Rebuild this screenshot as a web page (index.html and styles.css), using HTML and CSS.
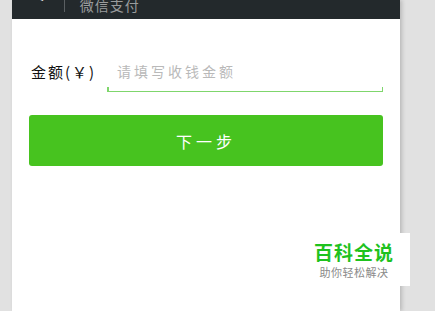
FILE: index.html
```html
<!DOCTYPE html>
<html lang="zh-CN">
<head>
    <meta charset="UTF-8">
    <meta name="viewport" content="width=device-width, initial-scale=1.0">
    <title>微信支付</title>
    <link rel="stylesheet" href="styles.css">
</head>
<body>

    <div class="phone">
        <div class="topbar">
            <span class="back">&lt;</span>
            <span class="divider"></span>
            <span class="title">微信支付</span>
        </div>

        <div class="form">
            <div class="field">
                <label class="label" for="amount">金额(￥)</label>
                <div class="input-wrap">
                    <input class="input" id="amount" type="text" placeholder="请填写收钱金额">
                </div>
            </div>

            <button class="next-button">下一步</button>
        </div>
    </div>

    <div class="badge">
        <div class="badge-title">百科全说</div>
        <div class="badge-sub">助你轻松解决</div>
    </div>

</body>
</html>
```

FILE: styles.css
```css
body {
    margin: 0;
    height: 311px;
    overflow: hidden;
    background-color: #e1e1e1;
    font-family: "Noto Sans CJK SC", "Noto Sans", sans-serif;
    position: relative;
}

.phone {
    margin-left: 12px;
    width: 388px;
    height: 311px;
    background: white;
    box-shadow: 2px 0 4px rgba(0, 0, 0, 0.18);
}

.topbar {
    height: 19px;
    background-color: #23292c;
    display: flex;
    align-items: flex-end;
    overflow: hidden;
}

.back {
    color: white;
    font-size: 20px;
    font-weight: bold;
    line-height: 20px;
    margin-left: 20px;
    margin-bottom: 13px;
}

.divider {
    width: 1px;
    height: 14px;
    background-color: #5a5f62;
    margin-left: 20px;
    margin-bottom: 7px;
}

.title {
    color: #9a9c9d;
    font-size: 14px;
    line-height: 14px;
    letter-spacing: 1px;
    margin-left: 15px;
    margin-bottom: 7px;
}

.form {
    padding: 0 17px;
}

.field {
    display: flex;
    align-items: flex-end;
    margin-top: 42px;
}

.label {
    width: 76px;
    padding-left: 2px;
    font-size: 15px;
    letter-spacing: 2px;
    color: #111;
    line-height: 20px;
    margin-bottom: 10px;
    white-space: nowrap;
}

.input-wrap {
    flex: 1;
    position: relative;
    border-bottom: 1.5px solid #7fd66c;
}

.input-wrap::before,
.input-wrap::after {
    content: "";
    position: absolute;
    bottom: 0;
    width: 1.5px;
    height: 4px;
    background-color: #7fd66c;
}

.input-wrap::before {
    left: 0;
}

.input-wrap::after {
    right: 0;
}

.input {
    display: block;
    width: 100%;
    box-sizing: border-box;
    border: none;
    outline: none;
    background: transparent;
    font-family: inherit;
    font-size: 14px;
    height: 30px;
    padding: 0 0 11px 10px;
    margin: 0;
    color: #333;
}

.input::placeholder {
    color: #b9b9b9;
    letter-spacing: 3px;
}

.next-button {
    display: block;
    width: 100%;
    height: 51px;
    margin-top: 23px;
    border: none;
    border-radius: 3px;
    background-color: #47c31f;
    color: white;
    font-family: inherit;
    font-size: 16px;
    letter-spacing: 4px;
    cursor: pointer;
}

.badge {
    position: absolute;
    left: 298px;
    top: 233px;
    width: 112px;
    height: 53px;
    background: white;
    text-align: center;
    box-sizing: border-box;
    padding-top: 8px;
}

.badge-title {
    color: #1ec21e;
    font-size: 19px;
    font-weight: bold;
    line-height: 21px;
    letter-spacing: 1px;
}

.badge-sub {
    color: #8a8a8a;
    font-size: 11px;
    line-height: 14px;
    margin-top: 3px;
    letter-spacing: 0.5px;
}
```
